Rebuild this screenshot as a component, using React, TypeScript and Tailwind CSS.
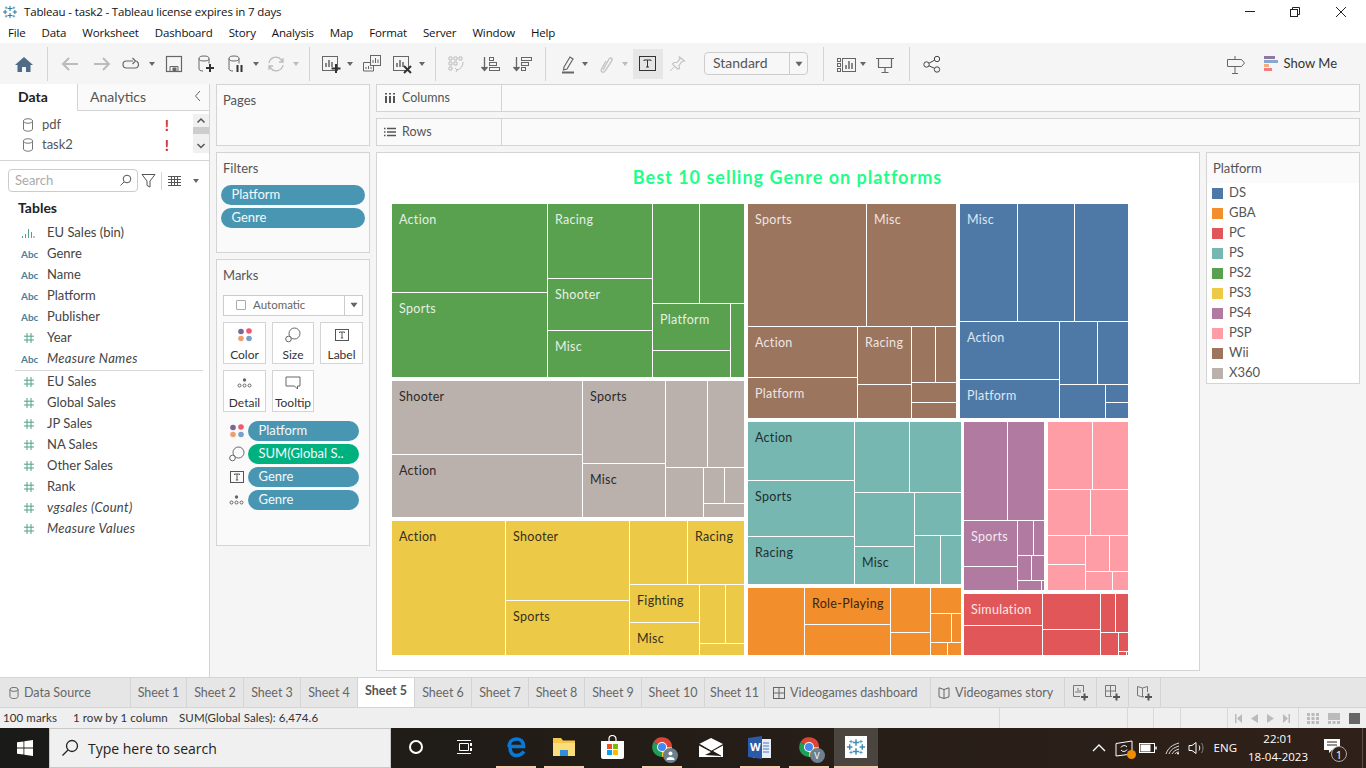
import React from 'react';

type Cell = [number, number, number, number, string?];

// x0, y0, x1, y1 in page pixels, the white line sits at x1 / y1
const treemap: { fill: string; text: string; cells: Cell[] }[] = [
  { fill: '#59a14f', text: '#e6efe4', cells: [
    [392, 204, 547, 292, 'Action'], [392, 293, 547, 377, 'Sports'],
    [548, 204, 652, 278, 'Racing'], [548, 279, 652, 330, 'Shooter'], [548, 331, 652, 377, 'Misc'],
    [653, 204, 699, 303], [700, 204, 744, 303],
    [653, 304, 730, 350, 'Platform'], [653, 351, 730, 377], [731, 304, 744, 377],
  ] },
  { fill: '#bab0ac', text: '#2c2a29', cells: [
    [392, 381, 582, 454, 'Shooter'], [392, 455, 582, 517, 'Action'],
    [583, 381, 665, 463, 'Sports'], [583, 464, 665, 517, 'Misc'],
    [666, 381, 707, 467], [708, 381, 744, 467],
    [666, 468, 703, 517], [704, 468, 724, 503], [725, 468, 744, 503], [704, 504, 744, 517],
  ] },
  { fill: '#edc948', text: '#36301a', cells: [
    [392, 521, 505, 655, 'Action'],
    [506, 521, 629, 600, 'Shooter'], [506, 601, 629, 655, 'Sports'],
    [630, 521, 687, 584], [688, 521, 744, 584, 'Racing'],
    [630, 585, 699, 622, 'Fighting'], [630, 623, 699, 655, 'Misc'],
    [700, 585, 725, 643], [726, 585, 744, 643], [700, 644, 744, 655],
  ] },
  { fill: '#9c755f', text: '#ece6e2', cells: [
    [748, 204, 866, 326, 'Sports'], [867, 204, 956, 326, 'Misc'],
    [748, 327, 857, 377, 'Action'], [748, 378, 857, 418, 'Platform'],
    [858, 327, 911, 384, 'Racing'], [858, 385, 911, 418],
    [912, 327, 935, 382], [936, 327, 956, 382],
    [912, 383, 956, 402], [912, 403, 956, 418],
  ] },
  { fill: '#4e79a7', text: '#dfe7ef', cells: [
    [960, 204, 1017, 321, 'Misc'], [1018, 204, 1074, 321], [1075, 204, 1128, 321],
    [960, 322, 1059, 379, 'Action'], [960, 380, 1059, 418, 'Platform'],
    [1060, 322, 1097, 384], [1098, 322, 1128, 384],
    [1060, 385, 1105, 418], [1106, 385, 1128, 402], [1106, 403, 1128, 418],
  ] },
  { fill: '#76b7b2', text: '#1f2f2e', cells: [
    [748, 422, 854, 480, 'Action'], [748, 481, 854, 536, 'Sports'], [748, 537, 854, 584, 'Racing'],
    [855, 422, 909, 492], [910, 422, 961, 492],
    [855, 493, 914, 546], [855, 547, 914, 584, 'Misc'],
    [915, 493, 961, 535], [915, 536, 940, 584], [941, 536, 961, 584],
  ] },
  { fill: '#f28e2b', text: '#3a2410', cells: [
    [748, 588, 804, 655], [805, 588, 890, 624, 'Role-Playing'], [805, 625, 890, 655],
    [891, 588, 930, 632], [891, 633, 930, 655], [931, 588, 961, 613],
    [931, 614, 951, 642], [952, 614, 961, 642], [931, 643, 947, 655], [948, 643, 961, 655],
  ] },
  { fill: '#b07aa1', text: '#f3e9f0', cells: [
    [964, 422, 1007, 520], [1008, 422, 1044, 520],
    [964, 521, 1017, 566, 'Sports'], [964, 567, 1017, 590],
    [1018, 521, 1033, 555], [1034, 521, 1044, 555],
    [1018, 556, 1031, 580], [1032, 556, 1044, 580],
    [1018, 581, 1041, 590], [1042, 581, 1044, 590],
  ] },
  { fill: '#ff9da7', text: '#3a2a2c', cells: [
    [1048, 422, 1092, 489], [1093, 422, 1128, 489],
    [1048, 490, 1090, 535], [1091, 490, 1128, 535],
    [1048, 536, 1085, 564], [1048, 565, 1085, 590],
    [1086, 536, 1109, 571], [1110, 536, 1128, 571],
    [1086, 572, 1112, 590], [1113, 572, 1128, 590],
  ] },
  { fill: '#e15759', text: '#fbe6e6', cells: [
    [964, 594, 1042, 625, 'Simulation'], [964, 626, 1042, 655],
    [1043, 594, 1100, 629], [1043, 630, 1100, 655],
    [1101, 594, 1115, 632], [1116, 594, 1128, 632],
    [1101, 633, 1118, 655], [1119, 633, 1128, 651], [1119, 652, 1126, 655], [1127, 652, 1128, 655],
  ] },
];

const legend = [
  { name: 'DS', bg: 'bg-[#4e79a7]' }, { name: 'GBA', bg: 'bg-[#f28e2b]' }, { name: 'PC', bg: 'bg-[#e15759]' },
  { name: 'PS', bg: 'bg-[#76b7b2]' }, { name: 'PS2', bg: 'bg-[#59a14f]' }, { name: 'PS3', bg: 'bg-[#edc948]' },
  { name: 'PS4', bg: 'bg-[#b07aa1]' }, { name: 'PSP', bg: 'bg-[#ff9da7]' }, { name: 'Wii', bg: 'bg-[#9c755f]' },
  { name: 'X360', bg: 'bg-[#bab0ac]' },
];

const fields: { name: string; kind: 'bin' | 'abc' | 'num'; italic?: boolean; divider?: boolean }[] = [
  { name: 'EU Sales (bin)', kind: 'bin' },
  { name: 'Genre', kind: 'abc' },
  { name: 'Name', kind: 'abc' },
  { name: 'Platform', kind: 'abc' },
  { name: 'Publisher', kind: 'abc' },
  { name: 'Year', kind: 'num' },
  { name: 'Measure Names', kind: 'abc', italic: true, divider: true },
  { name: 'EU Sales', kind: 'num' },
  { name: 'Global Sales', kind: 'num' },
  { name: 'JP Sales', kind: 'num' },
  { name: 'NA Sales', kind: 'num' },
  { name: 'Other Sales', kind: 'num' },
  { name: 'Rank', kind: 'num' },
  { name: 'vgsales (Count)', kind: 'num', italic: true },
  { name: 'Measure Values', kind: 'num', italic: true },
];

const Ico: React.FC<{ w?: number; h?: number; className?: string; children: React.ReactNode }> = ({ w = 20, h = 20, className = '', children }) => (
  <svg width={w} height={h} viewBox={`0 0 ${w} ${h}`} fill="none" stroke="currentColor" className={`shrink-0 ${className}`}>
    {children}
  </svg>
);

const Caret = ({ className = '' }: { className?: string }) => (
  <svg width="6" height="4" viewBox="0 0 6 4" className={`shrink-0 ${className}`}><path d="M0 0h6L3 4z" fill="currentColor" /></svg>
);

const Sep = ({ className = '' }: { className?: string }) => <div className={`h-[34px] w-px shrink-0 bg-[#d4d4d4] ${className}`} />;

const Db = ({ className = '' }: { className?: string }) => (
  <Ico w={12} h={14} className={className}>
    <ellipse cx="6" cy="3" rx="4.5" ry="2.2" />
    <path d="M1.500 3v8c0 1.200 2 2.200 4.500 2.200s4.500-1 4.500-2.200V3" />
  </Ico>
);

const Dots = () => (
  <svg width="16" height="14" viewBox="0 0 16 14" className="shrink-0">
    <circle cx="4" cy="3.500" r="2.800" fill="#7b6594" /><circle cx="12" cy="3" r="2.800" fill="#f0596f" />
    <circle cx="4" cy="10.500" r="2.800" fill="#eda06e" /><circle cx="12" cy="10.500" r="2.800" fill="#7b9fc9" />
  </svg>
);

const SizeIcon = () => (
  <Ico w={16} h={16} className="text-[#666]">
    <circle cx="9.500" cy="6.500" r="5.500" /><circle cx="3.500" cy="12" r="2.800" fill="#fafafa" />
  </Ico>
);

const TBox = () => (
  <svg width="14" height="12" viewBox="0 0 14 12" className="shrink-0 text-[#555]" fill="none" stroke="currentColor">
    <rect x=".5" y=".5" width="13" height="11" /><path d="M4.500 4V3h5v1M7 3v6M5.800 9h2.400" />
  </svg>
);

const DetailIcon = () => (
  <svg width="15" height="10" viewBox="0 0 15 10" className="shrink-0 text-[#666]" fill="none" stroke="currentColor">
    <circle cx="7.500" cy="2" r="1.700" fill="currentColor" stroke="none" />
    <circle cx="2.500" cy="7.500" r="1.500" /><circle cx="7.500" cy="7.500" r="1.500" /><circle cx="12.500" cy="7.500" r="1.500" />
  </svg>
);

const Pill = ({ label, className = '' }: { label: string; className?: string }) => (
  <div className={`flex h-5 items-center rounded-full pl-[10.500px] text-[13px] leading-none text-[#f4f9fb] ${className}`}>{label}</div>
);

const TableauMark = ({ size, color }: { size: number; color: string }) => (
  <svg width={size} height={size} viewBox="0 0 20 20" stroke={color} fill="none" className="shrink-0">
    <path d="M10 1.500v7M6.500 5h7M10 11.500v7M6.500 15h7M3 7v6M0 10h6M17 7v6M14 10h6" strokeWidth="1.600" />
    <path d="M4.500 2v4M2.500 4h4M15.500 2v4M13.500 4h4M4.500 14v4M2.500 16h4M15.500 14v4M13.500 16h4" strokeWidth=".9" />
  </svg>
);

const Chrome = ({ badge }: { badge: 'user' | 'v' }) => (
  <div className="relative h-6 w-6">
    <svg width="24" height="24" viewBox="0 0 24 24">
      <path d="M12 12 3.500 7A10 10 0 0 1 22 12z" fill="#dc4437" />
      <path d="M12 12H22A10 10 0 0 1 12 22z" fill="#f7c52d" />
      <path d="M12 12v10A10 10 0 0 1 3.500 7z" fill="#1f9e55" />
      <circle cx="12" cy="12" r="5" fill="#fff" /><circle cx="12" cy="12" r="4" fill="#4688f1" />
    </svg>
    <div className="absolute right-[-4px] bottom-[-4px] flex h-[15px] w-[15px] items-center justify-center rounded-full bg-[#6e7f8d] text-[9px] leading-none text-white">
      {badge === 'v' ? 'V' : (
        <svg width="9" height="9" viewBox="0 0 9 9" fill="#fff"><circle cx="4.500" cy="2.500" r="2" /><path d="M.5 9a4 3 0 0 1 8 0z" /></svg>
      )}
    </div>
  </div>
);

const TaskItem = ({ children, strip, className = 'w-[49px]' }: { children: React.ReactNode; strip?: boolean; className?: string }) => (
  <div className={`flex h-full shrink-0 flex-col items-center ${className}`}>
    <div className="flex flex-1 items-center justify-center">{children}</div>
    <div className={`h-0.5 w-10 ${strip ? 'bg-[#f6cdb4]' : ''}`} />
  </div>
);

const tabs = [
  { label: 'Sheet 1', w: 'w-[56px]' }, { label: 'Sheet 2', w: 'w-[57px]' }, { label: 'Sheet 3', w: 'w-[57px]' },
  { label: 'Sheet 4', w: 'w-[57px]' }, { label: 'Sheet 5', w: 'w-[57px]', active: true }, { label: 'Sheet 6', w: 'w-[57px]' },
  { label: 'Sheet 7', w: 'w-[57px]' }, { label: 'Sheet 8', w: 'w-[56px]' }, { label: 'Sheet 9', w: 'w-[57px]' },
  { label: 'Sheet 10', w: 'w-[63px]' }, { label: 'Sheet 11', w: 'w-[60px]' },
];

const DashGlyph = () => (
  <Ico w={12} h={12} className="text-[#666]"><rect x=".5" y=".5" width="11" height="11" /><path d="M6 .5v11M.5 6h11" /></Ico>
);

const StoryGlyph = () => (
  <Ico w={12} h={12} className="text-[#666]"><path d="M6 2.500 1 .8v9l5 1.700 5-1.700v-9zM6 2.500v9" /></Ico>
);

const PlusMark = () => (
  <path d="M11.500 8.500v7M8 12h7" stroke="#555" strokeWidth="2" />
);

export default function App() {
  return (
    <div className="flex h-[768px] w-[1366px] flex-col overflow-hidden bg-white font-['Lato',sans-serif] text-[#333]">
      {/* title bar */}
      <div className="flex h-[22px] shrink-0 items-center pt-px font-['Open_Sans',sans-serif] text-[11.500px] tracking-[-0.15px] text-[#111]">
        <div className="ml-[3px] mr-[7px]"><TableauMark size={14} color="#2e7ea6" /></div>
        <span>Tableau - task2 - Tableau license expires in 7 days</span>
        <div className="ml-auto flex items-center text-[#222]">
          <Ico w={12} h={12} className="mr-[33px]"><path d="M1 5.500h10" /></Ico>
          <Ico w={12} h={12} className="mr-[34px]"><rect x="1.500" y="3.500" width="7" height="7" /><path d="M3.500 3.500v-2h7v7h-2" /></Ico>
          <Ico w={12} h={12} className="mr-[19px]"><path d="M1 1l10 10M11 1 1 11" /></Ico>
        </div>
      </div>

      {/* menu */}
      <div className="flex h-[21px] shrink-0 items-center gap-4 px-2 pt-px font-['Open_Sans',sans-serif] text-[11.500px] tracking-[-0.15px] text-[#111]">
        {['File', 'Data', 'Worksheet', 'Dashboard', 'Story', 'Analysis', 'Map', 'Format', 'Server', 'Window', 'Help'].map((m) => (
          <span key={m}>{m}</span>
        ))}
      </div>

      {/* toolbar */}
      <div className="flex h-[41px] shrink-0 items-center bg-[#f5f5f5] text-[#666]">
        <Ico className="ml-[14px] text-[#4f6b86]"><path d="M10 3 19 11h-2.500v7H12v-5H8v5H3.500v-7H1z" fill="currentColor" stroke="none" /></Ico>
        <Sep className="ml-[13px]" />
        <Ico className="ml-[12px] text-[#bbb]"><path d="M18 10H3M9 4l-6 6 6 6" strokeWidth="2" /></Ico>
        <Ico className="ml-[12px] text-[#bbb]"><path d="M2 10h15M11 4l6 6-6 6" strokeWidth="2" /></Ico>
        <Ico className="ml-[9px]"><path d="M12 7H5.500a3.200 3.200 0 0 0 0 7h9a3.200 3.200 0 0 0 3-3.500c0-1.500-.6-2.500-2-3.500M11.500 4l3 3-3 3" strokeWidth="1.200" /></Ico>
        <Caret className="ml-2" />
        <Ico className="ml-[9px]"><rect x="2.500" y="2.500" width="15" height="15" strokeWidth="1.200" /><path d="M6 17.500v-5h8v5" /><rect x="9" y="14" width="3" height="3" fill="currentColor" /></Ico>
        <Ico className="ml-3">
          <ellipse cx="8" cy="4.500" rx="5" ry="2.500" /><path d="M3 4.500V15c0 1 1.500 2 4 2M13 4.500v5" />
          <path d="M14 10v8M10 14h8" stroke="#333" strokeWidth="2" />
        </Ico>
        <Ico className="ml-[10px]">
          <ellipse cx="8" cy="4.500" rx="5" ry="2.500" /><path d="M3 4.500V15c0 1 1.500 2 4 2M13 4.500v5" />
          <path d="M11.500 11v7M15.500 11v7" stroke="#333" strokeWidth="2" />
        </Ico>
        <Caret className="ml-[7px]" />
        <Ico className="ml-[7px] text-[#bbb]"><path d="M3 9a7 7 0 0 1 12.500-3L17 8M17 11a7 7 0 0 1-12.500 3L3 12M17 4v4h-4M3 16v-4h4" strokeWidth="1.300" /></Ico>
        <Caret className="ml-[7px] text-[#bbb]" />
        <Sep className="ml-[10px]" />
        <Ico className="ml-[11px]">
          <rect x="1.500" y="2.500" width="15" height="14" /><path d="M5 13V9M8 13V6M11 13V8" strokeWidth="1.500" />
          <path d="M15 10v9M10.500 14.500h9" stroke="#333" strokeWidth="2" />
        </Ico>
        <Caret className="ml-[6px]" />
        <Ico className="ml-[9px]">
          <rect x="8.500" y="1.500" width="10" height="10" /><path d="M11 9V6M13.500 9V4M16 9V5.500" />
          <path d="M8 8.500H1.500v8.500h10v-5M4 15v-2M6.500 15v-3M9 15v-2" />
        </Ico>
        <Ico className="ml-[10px]">
          <rect x="1.500" y="2.500" width="15" height="14" /><path d="M5 13V9M8 13V6M11 13V8" strokeWidth="1.500" />
          <path d="M12 12l7 7M19 12l-7 7" stroke="#333" strokeWidth="2" />
        </Ico>
        <Caret className="ml-[7px]" />
        <Sep className="ml-[10px]" />
        <Ico className="ml-[10px] text-[#bbb]">
          <path d="M3 3h3v3H3zM8 3h3v3H8zM13 3h3v3h-3zM3 8h3v3H3zM3 13h3v3H3zM8 8h3v3H8z" /><path d="M17 8c0 4-2 7-6 8M9 14l2 2-1 2" />
        </Ico>
        <Ico className="ml-[14px]">
          <path d="M4.500 3v13M1.500 13l3 3.500 3-3.500" fill="currentColor" strokeWidth="1.300" /><rect x="9.500" y="3.500" width="4" height="3" /><rect x="9.500" y="8.500" width="7" height="3" /><rect x="9.500" y="13.500" width="10" height="3" />
        </Ico>
        <Ico className="ml-3">
          <path d="M4.500 3v13M1.500 13l3 3.500 3-3.500" fill="currentColor" strokeWidth="1.300" /><rect x="9.500" y="3.500" width="10" height="3" /><rect x="9.500" y="8.500" width="7" height="3" /><rect x="9.500" y="13.500" width="4" height="3" />
        </Ico>
        <Sep className="ml-[13px]" />
        <Ico className="ml-3">
          <path d="M6 13 12 3l3 2-6 10-3.500 1z" strokeWidth="1.200" /><path d="M4 18.500h12" strokeWidth="2" />
        </Ico>
        <Caret className="ml-1" />
        <Ico className="ml-[7px] text-[#c4c4c4]"><path d="M8 16 14 5c1-2 4-.5 3 1.500L10 17c-1.500 2.500-5 .5-3.500-2L11 7" strokeWidth="1.400" /></Ico>
        <Caret className="ml-[7px] text-[#bbb]" />
        <div className="ml-[5px] flex h-[30px] w-[30px] shrink-0 items-center justify-center bg-[#e6e6e6] text-[#333]">
          <svg width="18" height="16" viewBox="0 0 18 16" fill="none" stroke="currentColor">
            <rect x=".5" y=".5" width="16" height="14" /><path d="M5 5V4h7v1M8.500 4v7M7 11h3" />
          </svg>
        </div>
        <Ico className="ml-1 text-[#c4c4c4]"><path d="M12 2.500 17.500 7l-2.500.5-3 4 .5 3-2 .5-5-5 1.500-1.500 3 0 3-3.500z" strokeWidth="1.200" /><path d="M7 13l-4 4" /></Ico>
        <div className="ml-[17px] flex h-[23px] w-[104px] shrink-0 items-center rounded-sm border border-[#ccc] bg-[#f7f7f7]">
          <span className="flex-1 pb-[2px] pl-2 text-[14px] text-[#555]">Standard</span>
          <div className="flex h-full w-[18px] items-center justify-center border-l border-[#ccc]"><Caret className="scale-125" /></div>
        </div>
        <Sep className="ml-[15px]" />
        <Ico className="ml-3">
          <rect x="1.500" y="4.500" width="3" height="3" /><rect x="1.500" y="9.500" width="3" height="3" /><rect x="1.500" y="14.500" width="3" height="3" />
          <rect x="6.500" y="4.500" width="13" height="13" /><path d="M10 15v-4M13 15V7M16 15v-6" strokeWidth="1.500" />
        </Ico>
        <Caret className="ml-1" />
        <Ico className="ml-[9px]"><path d="M1 4.500h18M3.500 4.500v9h13v-9M10 13.500v5M6.500 18.500h7" strokeWidth="1.200" /></Ico>
        <Sep className="ml-[14px]" />
        <Ico className="ml-3 text-[#444]"><circle cx="15" cy="5" r="2.700" /><circle cx="4.500" cy="10.500" r="2.700" /><circle cx="15" cy="15.500" r="2.700" /><path d="M7 9.200l5.500-3M7 11.800l5.500 2.500" /></Ico>
        <div className="flex-1" />
        <Ico className="mr-[18px]"><path d="M1.500 5.500h14l3 3.500-3 3.500h-14zM9 2v3.500M9 12.500v7M6 19.500h6" /></Ico>
        <svg width="14" height="15" viewBox="0 0 14 15" className="shrink-0">
          <rect width="11" height="3" fill="#8e7aa0" /><rect y="4" width="14" height="3" fill="#86a7cf" /><rect y="8" width="5" height="3" fill="#f5ad7e" /><rect y="12" width="8" height="3" fill="#f27c82" />
        </svg>
        <span className="ml-[6px] mr-[29px] text-[13px] text-[#333]">Show Me</span>
      </div>

      {/* main */}
      <div className="flex min-h-0 flex-1 bg-[#f5f5f5]">
        {/* data pane */}
        <div className="flex w-[210px] shrink-0 flex-col border-r border-[#d4d4d4] bg-white">
          <div className="flex h-[27px] shrink-0">
            <div className="flex w-[77px] items-center pb-[2px] pl-[18px] text-[14px] font-bold text-[#222]">Data</div>
            <div className="flex flex-1 items-center border-b border-l border-[#d4d4d4] bg-[#fafafa] pb-[2px] pl-[12px] text-[14px] text-[#555]">
              Analytics
              <Ico w={8} h={12} className="ml-auto mr-[7px] text-[#666]"><path d="M6 1 1.500 6 6 11" /></Ico>
            </div>
          </div>
          <div className="flex h-[50px] shrink-0 border-b border-[#d4d4d4] pt-[3px]">
            <div className="flex-1 pt-px">
              {['pdf', 'task2'].map((s) => (
                <div key={s} className="flex h-5 items-center pl-[22px] text-[13px] text-[#555]">
                  <Db className="text-[#777]" />
                  <span className="ml-2 flex-1">{s}</span>
                  <span className="mr-[24px] text-[15px] font-bold leading-none text-[#c8303d]">!</span>
                </div>
              ))}
            </div>
            <div className="flex h-[39px] w-[16px] flex-col items-center bg-[#f0f0f0] text-[#555]">
              <Ico w={10} h={13}><path d="M1.500 8.500 5 5l3.500 3.500" strokeWidth="1.500" /></Ico>
              <div className="h-[7px] w-full bg-[#cdcdcd]" />
              <Ico w={10} h={13} className="mt-auto"><path d="M1.500 4 5 7.500 8.500 4" strokeWidth="1.500" /></Ico>
            </div>
          </div>
          <div className="mt-2 flex h-[23px] shrink-0 items-center pl-2">
            <div className="flex h-full w-[130px] items-center rounded-sm border border-[#ccc] pl-[6px] pr-[5px] text-[13px] text-[#aaa]">
              Search
              <Ico w={13} h={13} className="ml-auto text-[#555]"><circle cx="8" cy="5" r="3.800" /><path d="M5 8 1.500 11.500" /></Ico>
            </div>
            <Ico w={15} h={15} className="ml-[3px] text-[#555]"><path d="M1 1.500h13L9 8v6L6 12.500V8z" /></Ico>
            <div className="ml-[5px] h-[18px] w-px bg-[#d4d4d4]" />
            <Ico w={13} h={10} className="ml-[6px] text-[#555]"><path d="M0 .5h13M0 3.500h13M0 6.500h13M0 9.500h13M3.500 0v10M6.500 0v10M9.500 0v10" /></Ico>
            <Caret className="ml-[12px] text-[#666]" />
          </div>
          <div className="mt-[5px] flex h-[20px] items-center pl-[18px] text-[14px] font-bold text-[#222]">Tables</div>
          <div className="mt-[5px]">
            {fields.map((f) => (
              <div key={f.name} className={f.divider ? 'ml-[15px] mr-[6px] h-[23px] border-b border-[#d9d9d9]' : 'ml-[15px] mr-[6px] h-[21px]'}>
                <div className="flex h-[21px] items-center text-[13px] text-[#444]">
                  <div className="flex w-[32px] justify-start pl-[6px]">
                    {f.kind === 'abc' && <span className="text-[10px] font-bold leading-none text-[#4e7f9a]">Abc</span>}
                    {f.kind === 'num' && (
                      <Ico w={12} h={12} className="ml-[2px] text-[#4fa383]"><path d="M4 1v10M8 1v10M1 4.200h10M1 8h10" /></Ico>
                    )}
                    {f.kind === 'bin' && (
                      <Ico w={14} h={10} className="text-[#4fa383]"><path d="M1.500 8v2M4.500 6v4M7.500 1v9M10.500 4v6M13 8v2" /></Ico>
                    )}
                  </div>
                  <span className={f.italic ? 'italic tracking-[0.3px]' : ''}>{f.name}</span>
                </div>
              </div>
            ))}
          </div>
        </div>

        {/* pages, filters, marks */}
        <div className="ml-[6px] flex w-[154px] shrink-0 flex-col gap-[6px]">
          <div className="h-[62px] border border-[#d4d4d4] bg-[#fafafa] pl-[6px] pt-[6px] text-[13px] text-[#555]">Pages</div>
          <div className="h-[101px] border border-[#d4d4d4] bg-[#fafafa] px-1 pt-[6px]">
            <div className="pl-[2px] text-[13px] text-[#555]">Filters</div>
            <div className="mt-[6px] flex flex-col gap-[3px]">
              <Pill label="Platform" className="bg-[#4996b2]" />
              <Pill label="Genre" className="bg-[#4996b2]" />
            </div>
          </div>
          <div className="h-[287px] border border-[#d4d4d4] bg-[#fafafa] px-[6px] pt-[6px]">
            <div className="text-[13px] text-[#555]">Marks</div>
            <div className="mt-[9px] flex h-[21px] items-center border border-[#ccc] bg-white text-[11.500px] text-[#666]">
              <div className="ml-[12px] mr-[7px] h-[10px] w-[10px] rounded-[1px] border border-[#aaa]" />
              <span className="flex-1">Automatic</span>
              <div className="flex h-full w-[18px] items-center justify-center border-l border-[#ccc]"><Caret className="scale-125" /></div>
            </div>
            <div className="mt-[6px] grid grid-cols-[43px_42px_43px] gap-x-[6px] gap-y-[6px] text-[12px] text-[#333]">
              {[
                { label: 'Color', icon: <Dots /> },
                { label: 'Size', icon: <SizeIcon /> },
                { label: 'Label', icon: <TBox /> },
                { label: 'Detail', icon: <DetailIcon /> },
                { label: 'Tooltip', icon: <Ico w={16} h={14} className="text-[#666]"><path d="M1 1h14v9h-2.500v3l-3-3H1z" /></Ico> },
              ].map((b) => (
                <div key={b.label} className="flex h-[42px] flex-col items-center border border-[#d4d4d4] bg-white">
                  <div className="flex h-[25px] items-center">{b.icon}</div>
                  <span className="leading-[14px]">{b.label}</span>
                </div>
              ))}
            </div>
            <div className="mt-[9px] flex flex-col gap-[3px]">
              {[
                { icon: <Dots />, label: 'Platform', bg: 'bg-[#4996b2]' },
                { icon: <SizeIcon />, label: 'SUM(Global S..', bg: 'bg-[#00b180]' },
                { icon: <TBox />, label: 'Genre', bg: 'bg-[#4996b2]' },
                { icon: <DetailIcon />, label: 'Genre', bg: 'bg-[#4996b2]' },
              ].map((p, i) => (
                <div key={i} className="flex items-center">
                  <div className="flex w-[25px] justify-center pl-[2px]">{p.icon}</div>
                  <Pill label={p.label} className={`w-[111px] ${p.bg}`} />
                </div>
              ))}
            </div>
          </div>
        </div>

        {/* shelves, view, legend */}
        <div className="ml-[6px] flex w-[984px] shrink-0 flex-col gap-[6px]">
          <div className="flex h-[28px] items-center border border-[#d4d4d4] bg-[#fafafa]">
            <div className="flex h-full w-[125px] items-center border-r border-[#d4d4d4] pl-[7px] text-[12.500px] text-[#555]">
              <Ico w={12} h={12} className="mr-[6px] text-[#555]"><path d="M2 4v7M6 4v7M10 4v7M2 1v1.500M6 1v1.500M10 1v1.500" strokeWidth="2" /></Ico>
              Columns
            </div>
          </div>
          <div className="flex h-[28px] items-center border border-[#d4d4d4] bg-[#fafafa]">
            <div className="flex h-full w-[125px] items-center border-r border-[#d4d4d4] pl-[7px] text-[12.500px] text-[#555]">
              <Ico w={12} h={12} className="mr-[6px] text-[#555]"><path d="M3 2.500h9M3 6h9M3 9.500h9M0 2.500h1.500M0 6h1.500M0 9.500h1.500" strokeWidth="1.500" /></Ico>
              Rows
            </div>
          </div>
          <div className="flex gap-[6px]">
            <div className="h-[519px] w-[824px] border border-[#d4d4d4] bg-white">
              <div className="flex h-[51px] items-center justify-center pb-[2px] pr-[1px] text-[18px] font-bold tracking-[1px] text-[#1eff8a]">Best 10 selling Genre on platforms</div>
              <svg viewBox="392 204 737 452" width="737" height="452" className="ml-[15px] block tracking-[0.3px]" shapeRendering="crispEdges">
                {treemap.map((g) =>
                  g.cells.map(([x0, y0, x1, y1, label]) => (
                    <g key={`${x0}-${y0}`}>
                      <rect x={x0} y={y0} width={x1 - x0} height={y1 - y0} fill={g.fill} />
                      {label && <text x={x0 + 7} y={y0 + 20} fontSize="12.500" fill={g.text}>{label}</text>}
                    </g>
                  )),
                )}
              </svg>
            </div>
            <div className="h-[232px] w-[154px] border border-[#d4d4d4] bg-white">
              <div className="flex h-[30px] items-center bg-[#fafafa] pl-[6px] pt-[2px] text-[13px] text-[#555]">Platform</div>
              <div>
                {legend.map((l) => (
                  <div key={l.name} className="flex h-5 items-center pl-[5px] text-[13px] text-[#555]">
                    <div className={`mr-[6px] h-[11px] w-[11px] ${l.bg}`} />
                    {l.name}
                  </div>
                ))}
              </div>
            </div>
          </div>
        </div>
      </div>

      {/* sheet tabs */}
      <div className="flex h-[31px] shrink-0 border-y border-[#d4d4d4] bg-[#e6e6e6] text-[12.500px] text-[#666]">
        <div className="flex w-[131px] items-center border-r border-[#d4d4d4] pl-[8px] pt-px">
          <Db className="scale-90 text-[#666]" />
          <span className="ml-[4px]">Data Source</span>
        </div>
        {tabs.map((t) => (
          <div key={t.label} className={`flex items-center justify-center border-r border-[#d4d4d4] ${t.w} ${t.active ? 'bg-white pb-[2px] font-bold text-[#555]' : 'pt-px'}`}>{t.label}</div>
        ))}
        <div className="flex w-[166px] items-center border-r border-[#d4d4d4] pl-[8px] pt-px">
          <DashGlyph />
          <span className="ml-[5px]">Videogames dashboard</span>
        </div>
        <div className="flex w-[134px] items-center border-r border-[#d4d4d4] pl-[7px] pt-px">
          <StoryGlyph />
          <span className="ml-[5px]">Videogames story</span>
        </div>
        <div className="flex w-[32px] items-center justify-center border-r border-[#d4d4d4]">
          <Ico w={16} h={16} className="text-[#777]"><path d="M7 11.500H.5v-11h10V7" /><path d="M3 8V6M5 8V3M7 8V5" /><PlusMark /></Ico>
        </div>
        <div className="flex w-[32px] items-center justify-center border-r border-[#d4d4d4]">
          <Ico w={16} h={16} className="text-[#777]"><path d="M7 11.500H.5v-11h10V7M5.500.5v11M.5 6h10" /><PlusMark /></Ico>
        </div>
        <div className="flex w-[32px] items-center justify-center border-r border-[#d4d4d4]">
          <Ico w={16} h={16} className="text-[#777]"><path d="M7 11.500 5.500 12 .5 10.500v-9L5.500 3l5-1.500V7M5.500 3v9" /><PlusMark /></Ico>
        </div>
      </div>

      {/* status */}
      <div className="flex h-[20px] shrink-0 items-center bg-[#efefef] text-[11.500px] tracking-[0.1px] text-[#333]">
        <div className="flex h-full w-[1000px] items-center border-r border-[#d9d9d9]">
          <span className="ml-[3px] w-[70px]">100 marks</span>
          <span className="w-[106px]">1 row by 1 column</span>
          <span>SUM(Global Sales): 6,474.6</span>
        </div>
        <div className="h-full w-[128px] border-r border-[#d9d9d9]" />
        <div className="h-full w-[26px] border-r border-[#d9d9d9]" />
        <div className="h-full w-[27px] border-r border-[#d9d9d9]" />
        <div className="h-full w-[47px] border-r border-[#d9d9d9]" />
        <div className="flex h-full w-[71px] items-center gap-[9px] border-r border-[#d9d9d9] pl-[7px] text-[#bbb]">
          <svg width="7" height="9" viewBox="0 0 7 9" fill="currentColor"><path d="M0 0h1.500v9H0zM7 0v9L2 4.500z" /></svg>
          <svg width="7" height="9" viewBox="0 0 7 9" fill="currentColor"><path d="M7 0v9L0 4.500z" /></svg>
          <svg width="7" height="9" viewBox="0 0 7 9" fill="currentColor"><path d="M0 0v9l7-4.500z" /></svg>
          <svg width="7" height="9" viewBox="0 0 7 9" fill="currentColor"><path d="M7 0H5.500v9H7zM0 0v9l5-4.500z" /></svg>
        </div>
        <svg width="12" height="11" viewBox="0 0 12 11" fill="#bbb" className="ml-2 shrink-0">
          <path d="M0 0h3v3H0zM4.500 0h3v3h-3zM9 0h3v3H9zM0 4h3v3H0zM4.500 4h3v3h-3zM9 4h3v3H9zM0 8h3v3H0zM4.500 8h3v3h-3zM9 8h3v3H9z" />
        </svg>
        <svg width="12" height="11" viewBox="0 0 12 11" fill="#bbb" className="ml-[9px] shrink-0">
          <path d="M0 0h12v7H0zM0 8h3v3H0zM4.500 8h3v3h-3zM9 8h3v3H9z" />
        </svg>
        <div className="ml-[9px] h-[11px] w-[11px] shrink-0 bg-[#666]" />
      </div>

      {/* taskbar */}
      <div className="flex h-[40px] shrink-0 items-stretch bg-linear-to-r from-[#1a1a18] via-[#241d17] to-[#2f2119] font-['Open_Sans',sans-serif] text-white">
        <div className="flex w-[49px] items-center justify-center">
          <svg width="16" height="16" viewBox="0 0 16 16" fill="#fff"><path d="M0 2.300 6.500 1.400v6.200H0zM7.300 1.300 16 0v7.600H7.300zM0 8.400h6.500v6.200L0 13.700zM7.300 8.400H16V16L7.300 14.700z" /></svg>
        </div>
        <div className="flex w-[342px] items-center border border-[#c8c8c8] bg-[#f0f0f0] pl-[11px] text-[14px] text-[#222]">
          <Ico w={18} h={18} className="mr-[9px] text-[#222]"><circle cx="11" cy="7" r="5.500" strokeWidth="1.300" /><path d="M7 11 1.500 16.500" strokeWidth="1.300" /></Ico>
          Type here to search
        </div>
        <TaskItem><div className="h-[14px] w-[14px] rounded-full border-2 border-white" /></TaskItem>
        <TaskItem className="w-[48px]">
          <Ico w={16} h={14} className="text-white"><path d="M3.500 3.500h9v7h-9zM1 .5h14M1 13.500h14" /><path d="M15 3v8" strokeWidth="2" strokeDasharray="3 2" /></Ico>
        </TaskItem>
        <div className="w-[3px]" />
        <TaskItem strip>
          <svg width="22" height="22" viewBox="0 0 22 22" fill="none" stroke="#0a78d7" strokeWidth="3.600">
            <path d="M4 11c0-5 3-8 7.500-8 4.500 0 7 3 7 7.500H5M19 15.500c-2 2.500-4.500 4-7.500 4C7 19.500 5 16 5 11" />
          </svg>
        </TaskItem>
        <TaskItem strip className="w-[48px]">
          <svg width="22" height="20" viewBox="0 0 22 20">
            <path d="M0 1h8l2 2.500h12V19H0z" fill="#f5c84c" /><path d="M0 6h22v13H0z" fill="#fbdd7b" /><path d="M7 13h8v6H7z" fill="#2f8fd8" />
          </svg>
        </TaskItem>
        <TaskItem>
          <svg width="23" height="24" viewBox="0 0 23 24">
            <path d="M8 7V4a3.500 3.500 0 0 1 7 0v3" fill="none" stroke="#fff" strokeWidth="1.200" />
            <path d="M0 6h23v16a2 2 0 0 1-2 2H2a2 2 0 0 1-2-2z" fill="#fff" />
            <path d="M6 9h5v5H6z" fill="#f25022" /><path d="M12 9h5v5h-5z" fill="#7fba00" /><path d="M6 15h5v5H6z" fill="#00a4ef" /><path d="M12 15h5v5h-5z" fill="#ffb900" />
          </svg>
        </TaskItem>
        <TaskItem strip><Chrome badge="user" /></TaskItem>
        <TaskItem>
          <svg width="24" height="19" viewBox="0 0 24 19">
            <path d="M0 6 12 0l12 6L12 13z" fill="#fff" /><path d="M0 7.500V19h24V7.500L14 13l8 5-16-1 6-3z" fill="#fff" /><path d="M0 6l12 7 10 5" fill="none" stroke="#241d17" />
          </svg>
        </TaskItem>
        <TaskItem strip>
          <svg width="23" height="23" viewBox="0 0 23 23">
            <path d="M5 3h18v19H5z" fill="#e8eef8" /><path d="M0 2 14 0v23L0 21z" fill="#2b5aa8" />
            <path d="M15 7h6M15 10h6M15 13h6M15 16h6" stroke="#4c78c0" />
            <text x="2" y="15" fontSize="11" fontWeight="700" fill="#fff">W</text>
          </svg>
        </TaskItem>
        <TaskItem strip><Chrome badge="v" /></TaskItem>
        <div className="w-px" />
        <div className="flex h-full w-[44px] flex-col items-center bg-[#4b4540]">
          <div className="flex flex-1 items-center justify-center">
            <div className="flex h-[22px] w-[22px] items-center justify-center bg-white"><TableauMark size={18} color="#3d8cb4" /></div>
          </div>
          <div className="h-0.5 w-full bg-[#f6cdb4]" />
        </div>
        <div className="flex-1" />
        <div className="flex items-center">
          <Ico w={14} h={10} className="text-white"><path d="M1 8l6-6 6 6" strokeWidth="1.400" /></Ico>
          <div className="relative ml-[9px]">
            <Ico w={18} h={17} className="text-white"><path d="M1 3.500 17 1v13l-16 2z" /><path d="M6 7.500a3.500 3.500 0 0 1 6-.5M12 9.500a3.500 3.500 0 0 1-6 .5" /></Ico>
            <div className="absolute bottom-[-2px] right-[-3px] h-[9px] w-[9px] rounded-full bg-[#f28c00]" />
          </div>
          <Ico w={18} h={10} className="ml-[6px] text-white"><rect x=".5" y=".5" width="15" height="9" /><rect x="2" y="2" width="9" height="6" fill="#fff" /><path d="M17 3.500v3" strokeWidth="1.500" /></Ico>
          <Ico w={16} h={14} className="ml-2 text-[#ddd]"><path d="M1 13c2-6 6-9 13-11M4 13c1.500-4 4-6 10-8M7 13c1-2 3-4 7-5M10 13c.5-1 2-2 4-2" /><circle cx="13" cy="12.500" r="1" fill="#fff" stroke="none" /></Ico>
          <Ico w={16} h={14} className="ml-[7px] text-white"><path d="M1 4.500h3L8 1.500v11L4 9.500H1zM11 4.500c1 1.500 1 3.500 0 5" /><path d="M13.500 2c2 3 2 7 0 10" stroke="#888" /></Ico>
          <span className="ml-[10px] text-[11.500px]">ENG</span>
          <div className="ml-[6px] flex w-[70px] flex-col items-center text-[11.500px] leading-[18px]">
            <span>22:01</span>
            <span>18-04-2023</span>
          </div>
          <div className="relative ml-2 mr-[15px] h-[24px] w-[26px]">
            <svg width="18" height="16" viewBox="0 0 18 16" className="absolute left-[3px] top-[3px]" fill="#fff"><path d="M0 0h16v11H8l-3 3v-3H0z" /><path d="M3 3h10M3 6h10" stroke="#2f2119" /></svg>
            <div className="absolute bottom-[-2px] right-0 flex h-[16px] w-[16px] items-center justify-center rounded-full border border-[#aaa] bg-[#2f2119] text-[11px] leading-none">1</div>
          </div>
          <div className="mr-[3px] h-full w-px bg-[#5a5048]" />
        </div>
      </div>
    </div>
  );
}
